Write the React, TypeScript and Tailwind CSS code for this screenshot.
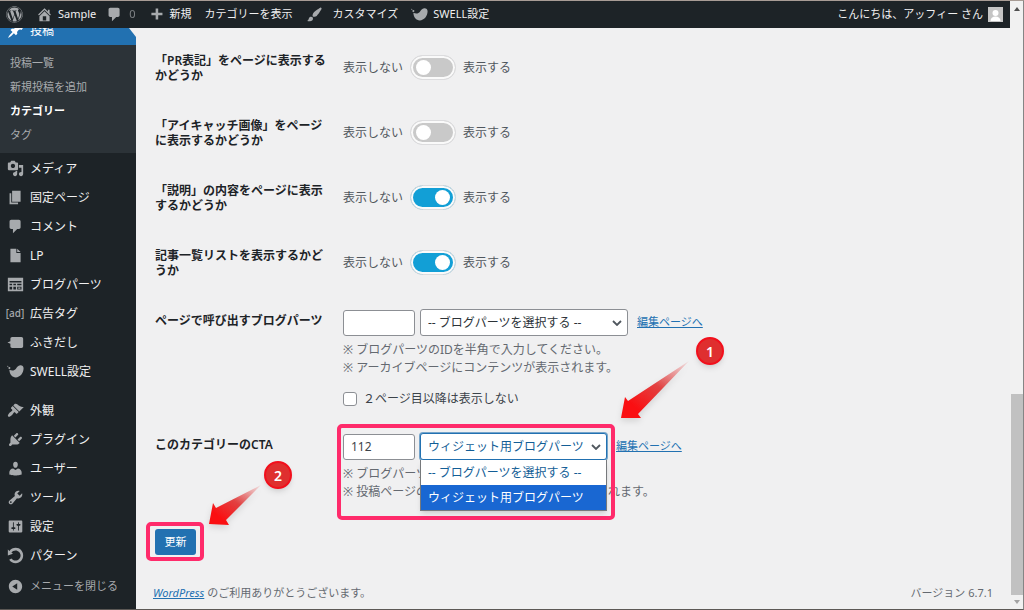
import { useState } from "react";
import type { ReactNode } from "react";
import { FaWordpress } from "react-icons/fa";

const ICONS = {
  home: "M16 8.5l1.53 1.53-1.06 1.06L10 4.6l-6.47 6.49-1.06-1.06L10 2.5l4 4v-2h2v4zm-6-2.46l6 5.99V18H4v-5.97zM12 17v-5H8v5h4z",
  comment:
    "M5 2h9c1.1 0 2 .9 2 2v7c0 1.1-.9 2-2 2h-2l-5 5v-5H5c-1.1 0-2-.9-2-2V4c0-1.1.9-2 2-2z",
  plus: "M17 8v3h-5v5H9v-5H4V8h5V3h3v5h5z",
  brush:
    "M18.33 3.57s.27-.8-.31-1.36c-.53-.52-1.22-.24-1.22-.24-.61.3-5.76 3.47-7.67 5.57-.86.96-2.06 3.79-1.09 4.82.92.98 3.96-.17 4.79-1 2.06-2.06 5.21-7.17 5.5-7.79zM1.4 17.65c2.37-1.56 1.46-3.41 3.23-4.64.93-.65 2.22-.62 3.08.29.63.67.8 2.57-.16 3.46-1.57 1.45-4 1.55-6.15.89z",
  swell:
    "M2.800 8c3 1.600 6 1.200 7.700-1.100 1.400-2 2.500-3.900 5-4.200 2.300-.2 4 1.100 4 3.600 0 5.800-4.200 10.700-9.200 10.700-4.300 0-7.200-3.500-7.500-9zM4 5.800a1.200 1.200 0 1 1-2.400 0 1.200 1.200 0 0 1 2.400 0zM1.600 3.800a.7.7 0 1 1-1.400 0 .7.7 0 0 1 1.400 0z",
  post: "M10.44 3.02l1.82-1.82 6.36 6.35-1.83 1.82c-1.05-.68-2.48-.57-3.41.36l-.75.75c-.92.93-1.04 2.35-.35 3.41l-1.83 1.82-2.41-2.41-2.8 2.79c-.42.42-3.38 2.71-3.8 2.29s1.86-3.39 2.28-3.81l2.79-2.79L4.1 9.36l1.83-1.82c1.05.69 2.48.57 3.4-.36l.75-.75c.93-.92 1.05-2.35.36-3.41z",
  media:
    "M13 11V4c0-.55-.45-1-1-1h-1.67L9 1H5L3.67 3H2c-.55 0-1 .45-1 1v7c0 .55.45 1 1 1h10c.55 0 1-.45 1-1zM7 4.5c1.38 0 2.5 1.12 2.5 2.5S8.38 9.5 7 9.5 4.5 8.38 4.5 7 5.62 4.5 7 4.5zM14 6h5v10.5c0 1.38-1.12 2.5-2.5 2.5S14 17.88 14 16.5s1.12-2.5 2.5-2.5c.17 0 .34.02.5.05V9h-3V6zm-4 8.05V13h2v3.5c0 1.38-1.12 2.5-2.5 2.5S7 17.88 7 16.5 8.12 14 9.5 14c.17 0 .34.02.5.05z",
  page: "M6 15V2h10v13H6zm-1 1h8v2H3V5h2v11z",
  file: "M4 2h7v5h5v11H4zM12 2l4 4h-4z",
  parts:
    "M1 2h18v16H1zM3 6v1.500h14V6zM3 9v2h3V9zM7.500 9v2h3V9zM12 9v2h5V9zM3 12.500V16h3v-3.500zM7.500 12.500V16h3v-3.500zM12 12.500V16h5v-3.500zM13.200 13.500h2.600V15h-2.600z",
  balloon:
    "M6 3.500h11c1.100 0 2 .9 2 2v9c0 1.100-.9 2-2 2H6c-1.100 0-2-.9-2-2v-3L.5 10 4 8.500v-3c0-1.100.9-2 2-2z",
  appearance:
    "M14.48 11.06L7.41 3.99l1.5-1.5c.5-.56 2.3-.47 3.51.32 1.21.8 1.43 1.28 2.91 2.1 1.18.64 2.45 1.26 4.45.85zm-.71.71L6.7 4.7 4.93 6.47c-.39.39-.39 1.02 0 1.41l1.06 1.06c.39.39.39 1.03 0 1.42-.6.6-1.43 1.11-2.21 1.69-.35.26-.7.53-1.01.84C1.43 14.23.4 16.08 1.4 17.07c.99 1 2.84-.03 4.18-1.36.31-.31.58-.66.85-1.02.57-.78 1.08-1.61 1.69-2.21.39-.39 1.02-.39 1.41 0l1.06 1.06c.39.39 1.02.39 1.41 0z",
  plugins:
    "M13.11 4.36L9.87 7.6 8 5.73l3.24-3.24c.35-.34 1.05-.2 1.56.32.52.51.66 1.21.31 1.55zm-8 1.77l.91-1.12 9.01 9.01-1.19.84c-.71.71-2.63 1.16-3.82 1.16H6.14L4.9 17.26c-.59.59-1.54.59-2.12 0-.59-.58-.59-1.53 0-2.12l1.24-1.24v-3.88c0-1.13.4-3.19 1.09-3.89zm7.26 3.97l3.24-3.24c.34-.35 1.04-.21 1.55.31.52.51.66 1.21.31 1.55l-3.24 3.25z",
  users:
    "M10 9.25c-2.27 0-2.73-3.44-2.73-3.44C7 4.02 7.82 2 9.97 2c2.16 0 2.98 2.02 2.71 3.81 0 0-.41 3.44-2.68 3.44zm0 2.57L12.72 10c2.39 0 4.52 2.33 4.52 4.53v2.49s-3.65 1.13-7.24 1.13c-3.65 0-7.24-1.13-7.24-1.13v-2.49c0-2.25 1.94-4.48 4.47-4.48z",
  tools:
    "M16.68 9.77c-1.34 1.34-3.3 1.67-4.95.99l-5.41 6.52c-.99.99-2.59.99-3.58 0s-.99-2.59 0-3.57l6.52-5.42c-.68-1.65-.35-3.61.99-4.95 1.28-1.28 3.12-1.62 4.72-1.06l-2.89 2.89 2.82 2.82 2.86-2.87c.53 1.58.18 3.39-1.08 4.65zM3.81 16.21c.4.39 1.04.39 1.43 0 .4-.4.4-1.04 0-1.43-.39-.4-1.03-.4-1.43 0-.39.39-.39 1.03 0 1.43z",
  settings:
    "M18 16V4c0-.55-.45-1-1-1H3c-.55 0-1 .45-1 1v12c0 .55.45 1 1 1h14c.55 0 1-.45 1-1zM8 11h1c.55 0 1 .45 1 1s-.45 1-1 1H8v1.5c0 .28-.22.5-.5.5s-.5-.22-.5-.5V13H6c-.55 0-1-.45-1-1s.45-1 1-1h1V5.5c0-.28.22-.5.5-.5s.5.22.5.5V11zm5-2h-1c-.55 0-1-.45-1-1s.45-1 1-1h1V5.5c0-.28.22-.5.5-.5s.5.22.5.5V7h1c.55 0 1 .45 1 1s-.45 1-1 1h-1v5.5c0 .28-.22.5-.5.5s-.5-.22-.5-.5V9z",
  rotate:
    "M10.25 1.02c5.1 0 8.75 4.04 8.75 9s-3.65 9-8.75 9c-3.2 0-6.02-1.59-7.68-3.99l2.59-1.52c1.1 1.5 2.86 2.51 4.84 2.51 3.3 0 6-2.79 6-6s-2.7-6-6-6c-1.97 0-3.72 1-4.82 2.49L7 8.02l-6 2v-7L2.89 4.6c1.69-2.17 4.36-3.58 7.36-3.58z",
  collapse:
    "M10 2.16c4.33 0 7.84 3.51 7.84 7.84s-3.51 7.84-7.84 7.84S2.16 14.33 2.16 10 5.67 2.16 10 2.16zm2 11.72V6.12L6.18 9.97z",
};

type IconName = keyof typeof ICONS;

function Icon({ name }: { name: IconName }) {
  return (
    <svg
      viewBox="0 0 20 20"
      className="size-[17px] shrink-0"
      fill="currentColor"
      fillRule="evenodd"
      aria-hidden="true"
    >
      <path d={ICONS[name]} />
    </svg>
  );
}

const contentMenu: { label: string; icon?: IconName }[] = [
  { label: "メディア", icon: "media" },
  { label: "固定ページ", icon: "page" },
  { label: "コメント", icon: "comment" },
  { label: "LP", icon: "file" },
  { label: "ブログパーツ", icon: "parts" },
  { label: "広告タグ" },
  { label: "ふきだし", icon: "balloon" },
  { label: "SWELL設定", icon: "swell" },
];

const siteMenu: { label: string; icon?: IconName }[] = [
  { label: "外観", icon: "appearance" },
  { label: "プラグイン", icon: "plugins" },
  { label: "ユーザー", icon: "users" },
  { label: "ツール", icon: "tools" },
  { label: "設定", icon: "settings" },
  { label: "パターン", icon: "rotate" },
];

const submenu = ["投稿一覧", "新規投稿を追加", "カテゴリー", "タグ"];

const toggles = [
  { id: "show_pr", label: "「PR表記」をページに表示するかどうか", on: false },
  { id: "show_thumb", label: "「アイキャッチ画像」をページに表示するかどうか", on: false },
  { id: "show_desc", label: "「説明」の内容をページに表示するかどうか", on: true },
  { id: "show_list", label: "記事一覧リストを表示するかどうか", on: true },
];

function AdminBar() {
  return (
    <header className="flex h-[27px] shrink-0 items-center bg-[#1d2327] pr-[7px] pl-[6px] text-[11px] text-[#f0f0f1]">
      <a href="#about" aria-label="WordPress" className="mr-[13px] text-[#a7aaad]">
        <FaWordpress className="size-[17px]" />
      </a>
      <a href="#site" className="mr-[10px] flex items-center gap-[5px]">
        <span className="text-[#a7aaad]"><Icon name="home" /></span>
        Sample
      </a>
      <a href="#comments" className="mr-3 flex items-center gap-[6px] text-[#a7aaad]">
        <Icon name="comment" />
        <span className="opacity-70">0</span>
      </a>
      <a href="#new" className="mr-[13px] flex items-center gap-[5px]">
        <span className="text-[#a7aaad]"><Icon name="plus" /></span>
        新規
      </a>
      <a href="#view" className="mr-[13px]">カテゴリーを表示</a>
      <a href="#customize" className="mr-[13px] flex items-center gap-[10px]">
        <span className="text-[#a7aaad]"><Icon name="brush" /></span>
        カスタマイズ
      </a>
      <a href="#swell" className="flex items-center gap-[5px]">
        <span className="text-[#a7aaad]"><Icon name="swell" /></span>
        SWELL設定
      </a>
      <a href="#profile" className="ml-auto flex items-center gap-[5px]">
        こんにちは、アッフィー さん
        <svg viewBox="0 0 15 15" className="size-[15px]" aria-hidden="true">
          <rect width="15" height="15" fill="#c5c5c5" />
          <circle cx="7.500" cy="6" r="3" fill="#fff" />
          <path d="M2.500 14c0-3 2-4.500 5-4.500s5 1.500 5 4.500z" fill="#fff" />
        </svg>
      </a>
    </header>
  );
}

function MenuItem({ label, icon }: { label: string; icon?: IconName }) {
  return (
    <li>
      <a href="#menu" className="flex h-[29px] items-center text-[12px] text-[#f0f0f1]">
        <span className="flex w-[30px] shrink-0 justify-center text-[#a7aaad]">
          {icon ? <Icon name={icon} /> : <span className="text-[10px] font-medium">[ad]</span>}
        </span>
        {label}
      </a>
    </li>
  );
}

function Sidebar() {
  return (
    <nav className="w-[136px] shrink-0 bg-[#1d2327]">
      {/* scrolled partly under the admin bar */}
      <div className="relative flex h-[17px] items-end overflow-hidden bg-[#2271b1]">
        <a href="#posts" className="flex h-[29px] shrink-0 items-center text-[12px] text-white">
          <span className="flex w-[30px] justify-center"><Icon name="post" /></span>
          投稿
        </a>
        <svg viewBox="0 0 7 9" className="absolute top-0 right-0 h-[9px] w-[7px]" aria-hidden="true">
          <path d="M0 0h7v9z" fill="#f0f0f1" />
        </svg>
      </div>
      <ul className="bg-[#2c3338] py-[6px] text-[11px]">
        {submenu.map((item) => (
          <li key={item}>
            <a
              href="#submenu"
              className={
                item === "カテゴリー"
                  ? "flex h-6 items-center pl-[10px] font-semibold text-white"
                  : "flex h-6 items-center pl-[10px] text-[#a9acaf]"
              }
            >
              {item}
            </a>
          </li>
        ))}
      </ul>
      <ul className="pt-px">
        {contentMenu.map((item) => (
          <MenuItem key={item.label} {...item} />
        ))}
      </ul>
      <ul className="mt-[10px]">
        {siteMenu.map((item) => (
          <MenuItem key={item.label} {...item} />
        ))}
      </ul>
      <button type="button" className="flex h-[32px] items-center text-[11px] text-[#a7aaad]">
        <span className="flex w-[30px] justify-center"><Icon name="collapse" /></span>
        メニューを閉じる
      </button>
    </nav>
  );
}

function Field({ id, label, children }: { id: string; label: string; children: ReactNode }) {
  return (
    <div className="flex min-h-[65px]">
      <div className="w-[188px] shrink-0 pt-[17px] pr-[14px]">
        <label htmlFor={id} className="block text-[12px] leading-[15px] font-semibold text-[#1d2327]">
          {label}
        </label>
      </div>
      <div className="relative grow pt-[13px]">{children}</div>
    </div>
  );
}

function Toggle({ id, on }: { id: string; on: boolean }) {
  return (
    <div className="flex items-center gap-[7px] pt-[6px] text-[12px] text-[#50575e]">
      <span>表示しない</span>
      <input
        id={id}
        type="checkbox"
        role="switch"
        defaultChecked={on}
        className="flex h-[25px] w-[46px] appearance-none items-center rounded-full border border-[#dcdcde] bg-[#c9c9c9] px-[5px] ring-2 ring-[#fafafa] ring-inset before:size-[15px] before:rounded-full before:bg-white before:content-[''] checked:justify-end checked:bg-[#129fd6]"
      />
      <span>表示する</span>
    </div>
  );
}

function Chevron() {
  return (
    <svg
      viewBox="0 0 10 6"
      className="pointer-events-none absolute top-[11px] right-[6px] h-[6px] w-[10px]"
      fill="none"
      stroke="#50575e"
      strokeWidth="1.800"
      aria-hidden="true"
    >
      <path d="M1 1l4 4 4-4" />
    </svg>
  );
}

// numbered red marker, its arrow fading out towards the badge
function Marker({ n, points, className, badgeClass }: { n: number; points: string; className: string; badgeClass: string }) {
  return (
    <div className={className}>
      <svg viewBox="0 0 100 70" className="h-[70px] w-[100px] drop-shadow-md" aria-hidden="true">
        <defs>
          <linearGradient id={`fade${n}`} x1="0" y1="1" x2="1" y2="0">
            <stop offset="0.2" stopColor="#fa0f12" />
            <stop offset="0.55" stopColor="#e12f2f" stopOpacity="0.9" />
            <stop offset="1" stopColor="#e85050" stopOpacity="0.1" />
          </linearGradient>
        </defs>
        <polygon points={points} fill={`url(#fade${n})`} />
      </svg>
      <span className={badgeClass}>{n}</span>
    </div>
  );
}

export default function App() {
  const [firstId, setFirstId] = useState("");
  const [ctaId, setCtaId] = useState("112");

  return (
    <div
      className="flex min-h-screen border-t border-r border-b border-t-[#a89c95] border-r-[#858585] border-b-[#5c5855] bg-[#f0f0f1] font-['Noto_Sans','Noto_Sans_CJK_JP',sans-serif] text-[#3c434a]"
    >
      <div className="flex min-w-0 grow flex-col">
        <AdminBar />
        <div className="flex grow">
          <Sidebar />
          <div className="flex min-w-0 grow flex-col">
            <form className="pt-2 pl-[19px]" onSubmit={(e) => e.preventDefault()}>
              {toggles.map((t) => (
                <Field key={t.id} id={t.id} label={t.label}>
                  <Toggle id={t.id} on={t.on} />
                </Field>
              ))}

              <Field id="parts_id" label="ページで呼び出すブログパーツ">
                <div className="flex items-center">
                  <input
                    id="parts_id"
                    value={firstId}
                    onChange={(e) => setFirstId(e.target.value)}
                    className="h-[26px] w-[72px] rounded-[3px] border border-[#8c8f94] bg-white px-[7px] text-[12px]"
                  />
                  <div className="relative ml-[5px] w-[208px]">
                    <select
                      aria-label="ブログパーツ"
                      className="block h-[27px] w-full appearance-none rounded-[3px] border border-[#8c8f94] bg-white pr-[20px] pl-[7px] text-[12px] text-[#2c3338]"
                    >
                      <option>-- ブログパーツを選択する --</option>
                    </select>
                    <Chevron />
                  </div>
                  <a href="#edit" className="ml-[9px] text-[11px] text-[#2271b1] underline">編集ページへ</a>
                </div>
                <p className="pt-[5px] text-[12px] leading-[18px] text-[#646970]">
                  ※ ブログパーツのIDを半角で入力してください。
                  <br />※ アーカイブページにコンテンツが表示されます。
                </p>
                <label className="mt-[13px] mb-3 flex h-[18px] items-center gap-[6px] text-[12px]">
                  <input
                    type="checkbox"
                    className="size-[14px] appearance-none rounded-[3px] border border-[#8c8f94] bg-white"
                  />
                  ２ページ目以降は表示しない
                </label>
              </Field>

              <Field id="cta_id" label="このカテゴリーのCTA">
                <div className="flex items-center">
                  <input
                    id="cta_id"
                    value={ctaId}
                    onChange={(e) => setCtaId(e.target.value)}
                    className="h-[26px] w-[72px] rounded-[3px] border border-[#8c8f94] bg-white px-[7px] text-[12px]"
                  />
                  <div className="relative ml-[5px] w-[187px]">
                    <select
                      aria-label="CTA"
                      className="block h-[27px] w-full appearance-none rounded-[3px] border border-[#2271b1] bg-white pr-[20px] pl-[7px] text-[12px] text-[#135e96] ring-1 ring-[#2271b1]/60"
                    >
                      <option>ウィジェット用ブログパーツ</option>
                    </select>
                    <Chevron />
                    <ul
                      role="listbox"
                      aria-label="CTA"
                      className="absolute top-full left-0 z-10 w-full border border-t-0 border-[#76797c] bg-white text-[12px] shadow-md"
                    >
                      <li role="option" aria-selected="false" className="flex h-[25px] items-center pl-[7px] text-[#135e96]">
                        -- ブログパーツを選択する --
                      </li>
                      <li role="option" aria-selected="true" className="flex h-[25px] items-center bg-[#1967d2] pl-[7px] text-white">
                        ウィジェット用ブログパーツ
                      </li>
                    </ul>
                  </div>
                  <a href="#edit" className="ml-[9px] text-[11px] text-[#2271b1] underline">編集ページへ</a>
                </div>
                <p className="pt-[5px] text-[12px] leading-[18px] text-[#646970]">
                  ※ ブログパーツのIDを半角で入力してください。
                  <br />※ 投稿ページの記事の下部にコンテンツが表示されます。
                </p>
                <div className="pointer-events-none absolute top-[4px] left-[-6px] h-[96px] w-[278px] rounded-[5px] border-4 border-[#ff2b6b]" />
                <Marker
                  n={1}
                  points="3,66 7,45 10,49 71,9 20,62 23,66"
                  className="pointer-events-none absolute top-[-68px] left-[275px]"
                  badgeClass="absolute top-[-15px] left-[78px] flex size-7 items-center justify-center rounded-full border-2 border-[#f20f1c] bg-[#df2f2f] text-[14px] font-semibold text-white shadow-md"
                />
              </Field>

              <div className="relative mt-7 w-max pb-[20px]">
                <button type="submit" className="block h-[26px] w-[41px] rounded-[3px] bg-[#2271b1] text-[11px] text-white">
                  更新
                </button>
                <div className="pointer-events-none absolute top-[-7px] left-[-9px] h-[39px] w-[58px] rounded-[5px] border-4 border-[#ff2b6b]" />
                <Marker
                  n={2}
                  points="4,59 8,38 11,43 56,20 21,55 24,60"
                  className="pointer-events-none absolute top-[-64px] left-[50px]"
                  badgeClass="absolute top-[-4px] left-[59px] flex size-7 items-center justify-center rounded-full border-2 border-[#f20f1c] bg-[#df2f2f] text-[14px] font-semibold text-white shadow-md"
                />
              </div>
            </form>

            <footer className="mt-auto flex justify-between px-[17px] pb-2 text-[11px] leading-4 text-[#646970]">
              <p>
                <a href="#wp" className="text-[#2271b1] italic underline">WordPress</a> のご利用ありがとうございます。
              </p>
              <p>バージョン 6.7.1</p>
            </footer>
          </div>
        </div>
      </div>

      <div className="flex w-[13px] shrink-0 flex-col items-center bg-[#f1f1f1] pl-px" aria-hidden="true">
        <svg viewBox="0 0 6 4" className="mt-[6px] h-[4px] w-[6px]">
          <path d="M3 0l3 4H0z" fill="#505050" />
        </svg>
        <div className="grow-[2]" />
        <div className="h-[201px] w-full bg-[#c1c1c1]" />
        <svg viewBox="0 0 6 4" className="my-[5px] h-[4px] w-[6px]">
          <path d="M0 0h6L3 4z" fill="#a3a3a3" />
        </svg>
      </div>
    </div>
  );
}
